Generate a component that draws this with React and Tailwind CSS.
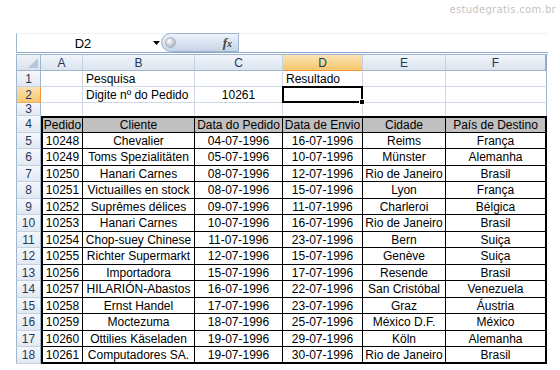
import React from "react";

const cols = [
  { key: "A", w: "w-[42px]" },
  { key: "B", w: "w-[112px]" },
  { key: "C", w: "w-[88px]" },
  { key: "D", w: "w-[80px]" },
  { key: "E", w: "w-[83px]" },
  { key: "F", w: "w-[101px]" },
];

const table = [
  ["Pedido", "Cliente", "Data do Pedido", "Data de Envio", "Cidade", "País de Destino"],
  ["10248", "Chevalier", "04-07-1996", "16-07-1996", "Reims", "França"],
  ["10249", "Toms Spezialitäten", "05-07-1996", "10-07-1996", "Münster", "Alemanha"],
  ["10250", "Hanari Carnes", "08-07-1996", "12-07-1996", "Rio de Janeiro", "Brasil"],
  ["10251", "Victuailles en stock", "08-07-1996", "15-07-1996", "Lyon", "França"],
  ["10252", "Suprêmes délices", "09-07-1996", "11-07-1996", "Charleroi", "Bélgica"],
  ["10253", "Hanari Carnes", "10-07-1996", "16-07-1996", "Rio de Janeiro", "Brasil"],
  ["10254", "Chop-suey Chinese", "11-07-1996", "23-07-1996", "Bern", "Suiça"],
  ["10255", "Richter Supermarkt", "12-07-1996", "15-07-1996", "Genève", "Suiça"],
  ["10256", "Importadora", "15-07-1996", "17-07-1996", "Resende", "Brasil"],
  ["10257", "HILARIÓN-Abastos", "16-07-1996", "22-07-1996", "San Cristóbal", "Venezuela"],
  ["10258", "Ernst Handel", "17-07-1996", "23-07-1996", "Graz", "Áustria"],
  ["10259", "Moctezuma", "18-07-1996", "25-07-1996", "México D.F.", "México"],
  ["10260", "Ottilies Käseladen", "19-07-1996", "29-07-1996", "Köln", "Alemanha"],
  ["10261", "Computadores SA.", "19-07-1996", "30-07-1996", "Rio de Janeiro", "Brasil"],
];

function RowHead({ n, h, active }) {
  return (
    <div
      className={`${h} w-[25px] shrink-0 flex items-center justify-center border-l border-b border-r text-[#1e395b] ${
        active
          ? "bg-linear-to-b from-[#fbe2b0] to-[#f6c86f] border-l-[#9eb6ce] border-b-[#e0b060] border-r-[#f29436]"
          : "bg-linear-to-b from-[#f4f7fb] to-[#e3e9f2] border-l-[#9eb6ce] border-b-[#c5d1e0] border-r-[#9eb6ce]"
      }`}
    >
      {n}
    </div>
  );
}

function GridCell({ w, h, children, align = "left", last }) {
  return (
    <div
      className={`${w} ${h} shrink-0 flex items-center whitespace-nowrap overflow-visible border-b border-[#d0d7e5] ${
        last ? "border-r border-r-[#9eb6ce]" : "border-r"
      } ${align === "center" ? "justify-center" : "justify-start pl-[3px]"}`}
    >
      {children}
    </div>
  );
}

export default function App() {
  return (
    <div className="w-[560px] h-[370px] bg-white overflow-hidden font-['Liberation_Sans',Arial,sans-serif] text-[12px] text-black leading-none">
      <div className="h-[33px] flex justify-end items-start pt-[5px] pr-[4px]">
        <span className="font-['DejaVu_Sans',sans-serif] text-[10px] text-[#c4c4c4] tracking-[0.3px]">estudegratis.com.br</span>
      </div>

      <div className="ml-[16px] w-[532px]">
        {/* formula bar */}
        <div className="h-[20px] flex border-l border-b border-l-[#9eb6ce] border-b-[#8ea9c9] border-t border-t-[#eef2f7]">
          <div className="w-[132px] flex items-center justify-center text-[13px] text-black">D2</div>
          <div className="w-[12px] flex items-center justify-start pl-[4px]">
            <svg width="7" height="4" viewBox="0 0 7 4">
              <path d="M0 0H7L3.5 4Z" fill="#000" />
            </svg>
          </div>
          <div className="w-[78px] h-[19px] -mt-[1px] rounded-l-full border border-[#9fb4cf] bg-linear-to-b from-[#eef3fa] to-[#c6d4e8] flex items-center justify-between pl-[3px] pr-[6px]">
            <div className="w-[11px] h-[11px] rounded-full bg-radial-[at_35%_35%] from-[#ffffff] to-[#8f9cad] border border-[#aab7c8]" />
            <span className="font-['Liberation_Serif',serif] italic font-bold text-[13px] text-[#444]">
              f<span className="text-[10px]">x</span>
            </span>
          </div>
          <div className="flex-1" />
        </div>
        <div className="h-[2px] border-b border-[#9eb6ce]" />

        {/* column headers */}
        <div className="flex h-[16px]">
          <div className="w-[25px] h-[16px] shrink-0 border-l border-r border-b border-[#9eb6ce] bg-linear-to-b from-[#eef2f8] to-[#dbe3ee] relative">
            <svg className="absolute right-[2px] bottom-[2px]" width="10" height="10" viewBox="0 0 10 10">
              <path d="M10 0V10H0Z" fill="#b6c6da" />
            </svg>
          </div>
          {cols.map((c, i) => (
            <div
              key={c.key}
              className={`${c.w} h-[16px] shrink-0 flex items-center justify-center text-[#1e395b] border-b ${
                i === 5 ? "border-r-2 border-r-[#8ea9c9]" : "border-r border-r-[#c5d1e0]"
              } ${
                c.key === "D"
                  ? "bg-linear-to-b from-[#fbe3b3] to-[#f6c76c] border-b-[#f29436]"
                  : "bg-linear-to-b from-[#f1f5fa] to-[#dce4ef] border-b-[#9eb6ce]"
              }`}
            >
              {c.key}
            </div>
          ))}
        </div>

        {/* row 1 */}
        <div className="flex">
          <RowHead n="1" h="h-[16px]" />
          <GridCell w={cols[0].w} h="h-[16px]" />
          <GridCell w={cols[1].w} h="h-[16px]">Pesquisa</GridCell>
          <GridCell w={cols[2].w} h="h-[16px]" />
          <GridCell w={cols[3].w} h="h-[16px]">Resultado</GridCell>
          <GridCell w={cols[4].w} h="h-[16px]" />
          <GridCell w={cols[5].w} h="h-[16px]" last />
        </div>

        {/* row 2 */}
        <div className="flex">
          <RowHead n="2" h="h-[16px]" active />
          <GridCell w={cols[0].w} h="h-[16px]" />
          <GridCell w={cols[1].w} h="h-[16px]">Digite nº do Pedido</GridCell>
          <GridCell w={cols[2].w} h="h-[16px]" align="center">10261</GridCell>
          <div className="w-[80px] h-[16px] shrink-0 relative border-r border-b border-[#d0d7e5]">
            <div className="absolute -left-[1px] -top-[1px] w-[81px] h-[17px] border-2 border-black z-10" />
            <div className="absolute -right-[3px] -bottom-[3px] w-[6px] h-[6px] bg-black border border-white z-20" />
          </div>
          <GridCell w={cols[4].w} h="h-[16px]" />
          <GridCell w={cols[5].w} h="h-[16px]" last />
        </div>

        {/* row 3 */}
        <div className="flex">
          <RowHead n="3" h="h-[13px]" />
          {cols.map((c, i) => (
            <div key={c.key} className={`${c.w} h-[13px] shrink-0 ${i === 5 ? "border-r border-r-[#9eb6ce]" : "border-r border-r-[#d0d7e5]"}`} />
          ))}
        </div>

        {/* rows 4-18 */}
        {table.map((row, ri) => {
          const h = ri % 2 === 0 ? "h-[17px]" : "h-[16px]";
          const first = ri === 0;
          const lastRow = ri === table.length - 1;
          return (
            <div key={ri} className="flex">
              <RowHead n={String(ri + 4)} h={h} />
              {row.map((v, ci) => (
                <div
                  key={ci}
                  className={`${cols[ci].w} ${h} shrink-0 flex items-center justify-center whitespace-nowrap overflow-hidden border-black ${
                    ci === 0 ? "border-l-2" : ""
                  } ${ci === 5 ? "border-r-2" : "border-r"} ${first ? "border-t-2 bg-[#c0c0c0]" : ""} ${
                    lastRow ? "border-b-2" : "border-b"
                  }`}
                >
                  {v}
                </div>
              ))}
            </div>
          );
        })}
      </div>
    </div>
  );
}
